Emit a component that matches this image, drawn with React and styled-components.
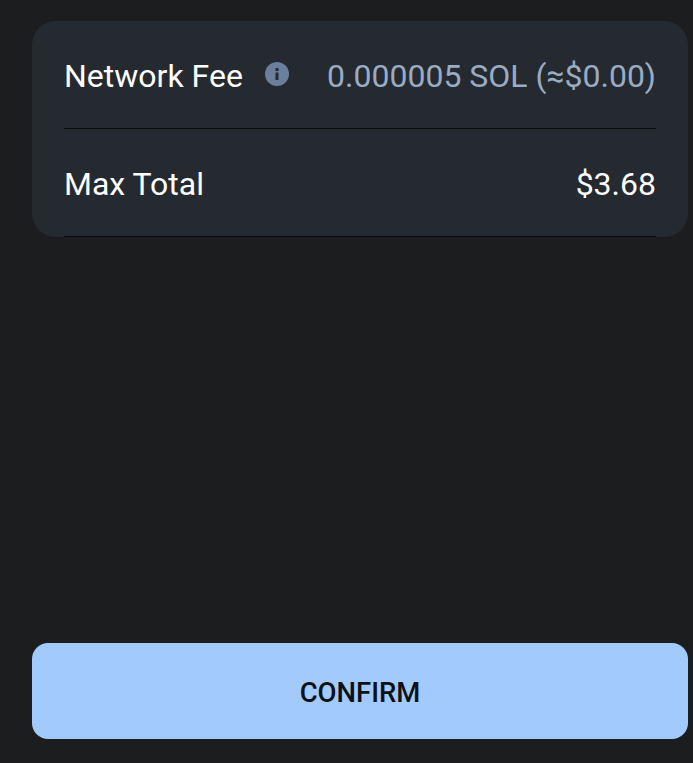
import React from 'react';
import styled, { createGlobalStyle } from 'styled-components';

const GlobalStyle = createGlobalStyle`
  html, body {
    margin: 0;
    background-color: #1c1d1f;
    font-family: Roboto, "Liberation Sans", sans-serif;
  }
`;

const StyledPage = styled.div`
  box-sizing: border-box;
  display: flex;
  flex-direction: column;
  justify-content: space-between;
  height: 763px;
  padding: 21px 5px 24px 32px;
  overflow: hidden;
`;

const StyledCard = styled.div`
  background-color: #252a31;
  border-radius: 24px;
  padding: 0 32px;
`;

const StyledRow = styled.div`
  box-sizing: border-box;
  display: flex;
  justify-content: space-between;
  align-items: center;
  height: 108px;
  padding-top: 3px;
  border-bottom: 1px solid #0b0c0e;
  font-size: 32px;
`;

const StyledLabel = styled.div`
  display: flex;
  align-items: center;
  gap: 22px;
  color: #ffffff;
`;

const StyledValue = styled.div`
  color: ${({ $muted }) => ($muted ? '#9aabc4' : '#ffffff')};
`;

const StyledInfo = styled.svg`
  width: 24px;
  height: 24px;
  display: block;
  margin-top: -5px;
`;

const StyledButton = styled.button`
  height: 96px;
  padding: 3px 0 0;
  border: 0;
  border-radius: 16px;
  background-color: #a3cafd;
  color: #0e1116;
  font-family: inherit;
  font-size: 27.5px;
  font-weight: 500;
`;

const InfoIcon = () => (
  <StyledInfo viewBox="0 0 24 24">
    <circle cx="12" cy="12" r="12" fill="#6b7f9c" />
    <rect x="10.5" y="6" width="3" height="3" rx="0.6" fill="#252a31" />
    <rect x="10.5" y="10.5" width="3" height="7.5" rx="0.6" fill="#252a31" />
  </StyledInfo>
);

const App = () => (
  <StyledPage>
    <GlobalStyle />
    <StyledCard>
      <StyledRow>
        <StyledLabel>
          Network Fee
          <InfoIcon />
        </StyledLabel>
        <StyledValue $muted>0.000005 SOL (≈$0.00)</StyledValue>
      </StyledRow>
      <StyledRow>
        <StyledLabel>Max Total</StyledLabel>
        <StyledValue>$3.68</StyledValue>
      </StyledRow>
    </StyledCard>
    <StyledButton type="button">CONFIRM</StyledButton>
  </StyledPage>
);

export default App;
